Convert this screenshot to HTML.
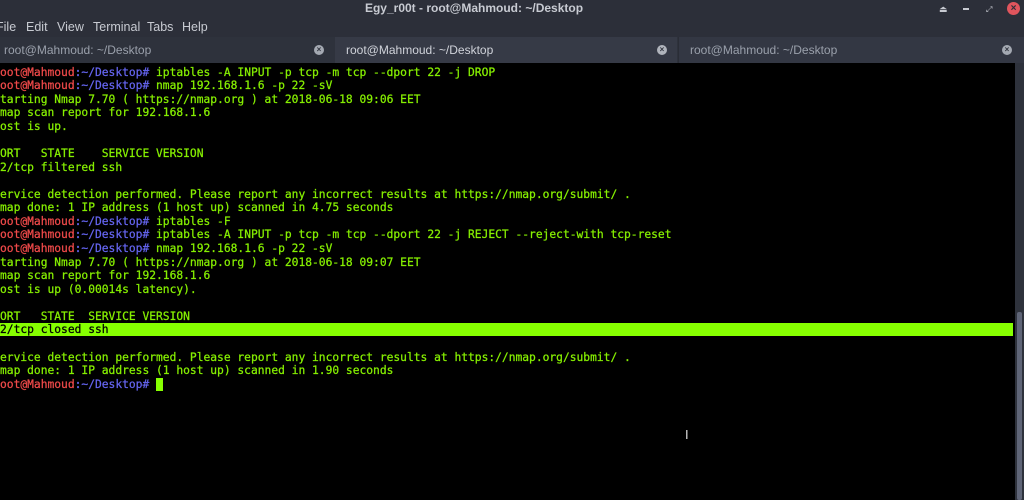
<!DOCTYPE html>
<html><head><style>
body{margin:0;width:1024px;height:500px;overflow:hidden;background:#000;font-family:"Liberation Sans",sans-serif;position:relative}
.top{position:absolute;left:0;top:0;width:1024px;height:37px;background:#2c2f39}
.title{position:absolute;top:1px;left:0;width:948px;text-align:center;color:#c8cbd2;font-size:12px;font-weight:bold}
.menu{position:absolute;top:20px;font-size:12.5px;color:#c8cbd2}
.tabs{position:absolute;top:37px;left:0;width:1024px;height:26px;background:#2e323c}
.tab{position:absolute;top:0;height:26px;color:#9aa0ab;font-size:12px;line-height:27px}
.x{position:absolute;top:8px;width:10px;height:10px;border-radius:50%;background:#a4a9b2;color:#2e323c;font-size:8px;line-height:10px;text-align:center;font-weight:bold}
.term{position:absolute;left:-6.78px;top:65.5px;font-family:"DejaVu Sans Mono",monospace;font-size:11.27px;line-height:13.58px;color:#86ef00;white-space:pre;-webkit-text-stroke:0.25px}
.r{color:#ef4a4a}.b{color:#6565f0}
.hl{position:absolute;left:0;top:323px;width:1013px;height:13px;background:#86ff00}
.sb{position:absolute;left:1015px;top:63px;width:9px;height:437px;background:#2e323c}
.th{position:absolute;left:1017px;top:312px;width:5px;height:188px;background:#5f6577;border-radius:2px}
</style></head><body>
<div class="top">
<div class="title">Egy_r00t - root@Mahmoud: ~/Desktop</div>
<div style="position:absolute;left:939px;top:4px;color:#c8cbd2;font-size:9px">⏏</div>
<div style="position:absolute;left:963px;top:8px;width:6px;height:2px;background:#c8cbd2"></div>
<div style="position:absolute;left:986px;top:5px;color:#c8cbd2;font-size:8px">⤢</div>
<div style="position:absolute;left:1007px;top:2px;width:13px;height:13px;border-radius:50%;background:#e0555d;color:#2c2f39;font-size:10px;line-height:13px;text-align:center;font-weight:bold">×</div>
<div class="menu" style="left:-4px">File</div>
<div class="menu" style="left:26px">Edit</div>
<div class="menu" style="left:57px">View</div>
<div class="menu" style="left:93px">Terminal</div>
<div class="menu" style="left:147px">Tabs</div>
<div class="menu" style="left:182px">Help</div>
</div>
<div class="tabs">
<div class="tab" style="left:0;width:334px;background:#2e323c"><span style="padding-left:4px">root@Mahmoud: ~/Desktop</span><div class="x" style="left:314px">×</div></div>
<div class="tab" style="left:335px;width:342px;background:#363a46;color:#d0d3da"><span style="padding-left:11px">root@Mahmoud: ~/Desktop</span><div class="x" style="left:322px;background:#b0b4bc">×</div></div>
<div class="tab" style="left:678px;width:346px;background:#333743;border-left:1px solid #2a2d36"><span style="padding-left:11px">root@Mahmoud: ~/Desktop</span><div class="x" style="left:323px">×</div></div>
</div>
<div class="hl"></div>
<div class="term"><span class="r">root@Mahmoud</span><span class="b">:~/Desktop#</span> iptables -A INPUT -p tcp -m tcp --dport 22 -j DROP
<span class="r">root@Mahmoud</span><span class="b">:~/Desktop#</span> nmap 192.168.1.6 -p 22 -sV
Starting Nmap 7.70 ( https://nmap.org ) at 2018-06-18 09:06 EET
Nmap scan report for 192.168.1.6
Host is up.

PORT   STATE    SERVICE VERSION
22/tcp filtered ssh

Service detection performed. Please report any incorrect results at https://nmap.org/submit/ .
Nmap done: 1 IP address (1 host up) scanned in 4.75 seconds
<span class="r">root@Mahmoud</span><span class="b">:~/Desktop#</span> iptables -F
<span class="r">root@Mahmoud</span><span class="b">:~/Desktop#</span> iptables -A INPUT -p tcp -m tcp --dport 22 -j REJECT --reject-with tcp-reset
<span class="r">root@Mahmoud</span><span class="b">:~/Desktop#</span> nmap 192.168.1.6 -p 22 -sV
Starting Nmap 7.70 ( https://nmap.org ) at 2018-06-18 09:07 EET
Nmap scan report for 192.168.1.6
Host is up (0.00014s latency).

PORT   STATE  SERVICE VERSION
<span style="color:#000">22/tcp closed ssh</span>

Service detection performed. Please report any incorrect results at https://nmap.org/submit/ .
Nmap done: 1 IP address (1 host up) scanned in 1.90 seconds
<span class="r">root@Mahmoud</span><span class="b">:~/Desktop#</span> <span style="background:#86ff00"> </span></div>
<div class="sb"></div><div class="th"></div>
<div style="position:absolute;left:685px;top:427px;color:#ddd;font-size:13px">I</div>
</body></html>
